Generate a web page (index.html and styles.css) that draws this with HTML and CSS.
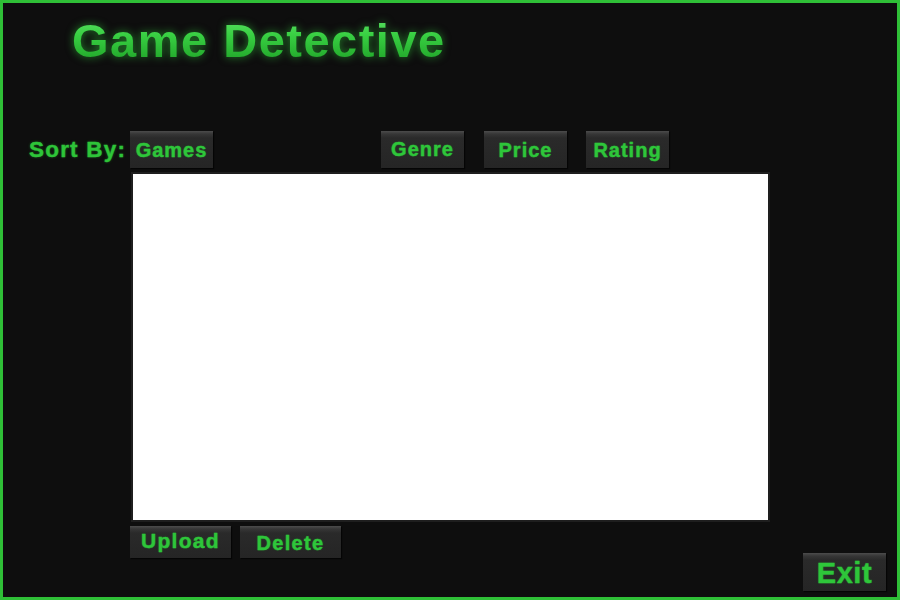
FILE: index.html
```html
<!DOCTYPE html>
<html>
<head>
<meta charset="utf-8">
<title>Game Detective</title>
<link rel="stylesheet" href="styles.css">
</head>
<body>
<div class="window">
  <h1 class="title">Game Detective</h1>
  <div class="sort-row">
    <span class="sort-label">Sort By:</span>
    <button class="btn btn-sort">Games</button>
    <button class="btn btn-sort btn-genre">Genre</button>
    <button class="btn btn-sort btn-price">Price</button>
    <button class="btn btn-sort btn-rating">Rating</button>
  </div>
  <div class="list"></div>
  <div class="footer">
    <div class="actions">
      <button class="btn btn-action btn-upload">Upload</button>
      <button class="btn btn-action btn-delete">Delete</button>
    </div>
    <button class="btn btn-exit">Exit</button>
  </div>
</div>
</body>
</html>
```
FILE: styles.css
```css
html, body {
  margin: 0;
  padding: 0;
  background: #0e0e0e;
}

.window {
  width: 900px;
  height: 600px;
  box-sizing: border-box;
  border: 3px solid #2fbf37;
  background: #0e0e0e;
  display: flex;
  flex-direction: column;
  font-family: "Liberation Sans", Arial, sans-serif;
  font-weight: bold;
}

.title {
  margin: 10px 0 0 69px;
  height: 56px;
  font-size: 47px;
  line-height: 56px;
  letter-spacing: 1.5px;
  font-weight: bold;
  align-self: flex-start;
  color: transparent;
  background: linear-gradient(180deg, #62e46a 0%, #38cf42 40%, #27b030 75%, #1c9524 100%);
  -webkit-background-clip: text;
  background-clip: text;
  filter: drop-shadow(0 0 4px rgba(50, 210, 60, 0.6));
}

.sort-row {
  margin-top: 62px;
  height: 37px;
  display: flex;
  align-items: stretch;
}

.sort-label {
  width: 101px;
  padding-left: 26px;
  font-size: 22.5px;
  letter-spacing: 1.2px;
  line-height: 37px;
  color: #2ec439;
  -webkit-text-stroke: 0.4px #2ec439;
  text-shadow: 0 0 3px rgba(40, 200, 50, 0.45);
}

.btn {
  border: none;
  margin: 0;
  padding: 0;
  font-family: "Liberation Sans", Arial, sans-serif;
  font-weight: bold;
  color: #2ec63a;
  -webkit-text-stroke: 0.4px #2ec63a;
  background: linear-gradient(180deg, #4c4c4c 0px, #363636 3px, #2a2a2a 7px, #252525 100%);
  box-shadow: 1px 1px 1px rgba(0, 0, 0, 0.6);
  text-shadow: 0 0 2px rgba(40, 200, 50, 0.35);
  cursor: pointer;
}

.btn-sort {
  width: 83px;
  height: 37px;
  font-size: 20px;
  letter-spacing: 1px;
  line-height: 37px;
  padding-top: 1px;
}

.btn-genre {
  margin-left: 168px;
  padding-top: 0;
  padding-bottom: 2px;
}

.btn-price {
  margin-left: 20px;
}

.btn-rating {
  margin-left: 19px;
}

.list {
  margin: 4px 0 0 128px;
  width: 635px;
  height: 346px;
  background: #ffffff;
  border: 2px solid #1e1e1e;
}

.footer {
  margin-top: 4px;
  display: flex;
  justify-content: space-between;
  align-items: flex-start;
}

.actions {
  margin-left: 127px;
  display: flex;
  gap: 9px;
}

.btn-action {
  width: 101px;
  height: 32px;
  font-size: 20px;
  letter-spacing: 1.3px;
}

.btn-upload {
  font-size: 21px;
  padding-bottom: 3px;
}

.btn-delete {
  padding-top: 2px;
}

.btn-exit {
  margin: 27px 11px 0 0;
  width: 83px;
  height: 38px;
  font-size: 29px;
  letter-spacing: 0.6px;
  padding-top: 3px;
}
```
